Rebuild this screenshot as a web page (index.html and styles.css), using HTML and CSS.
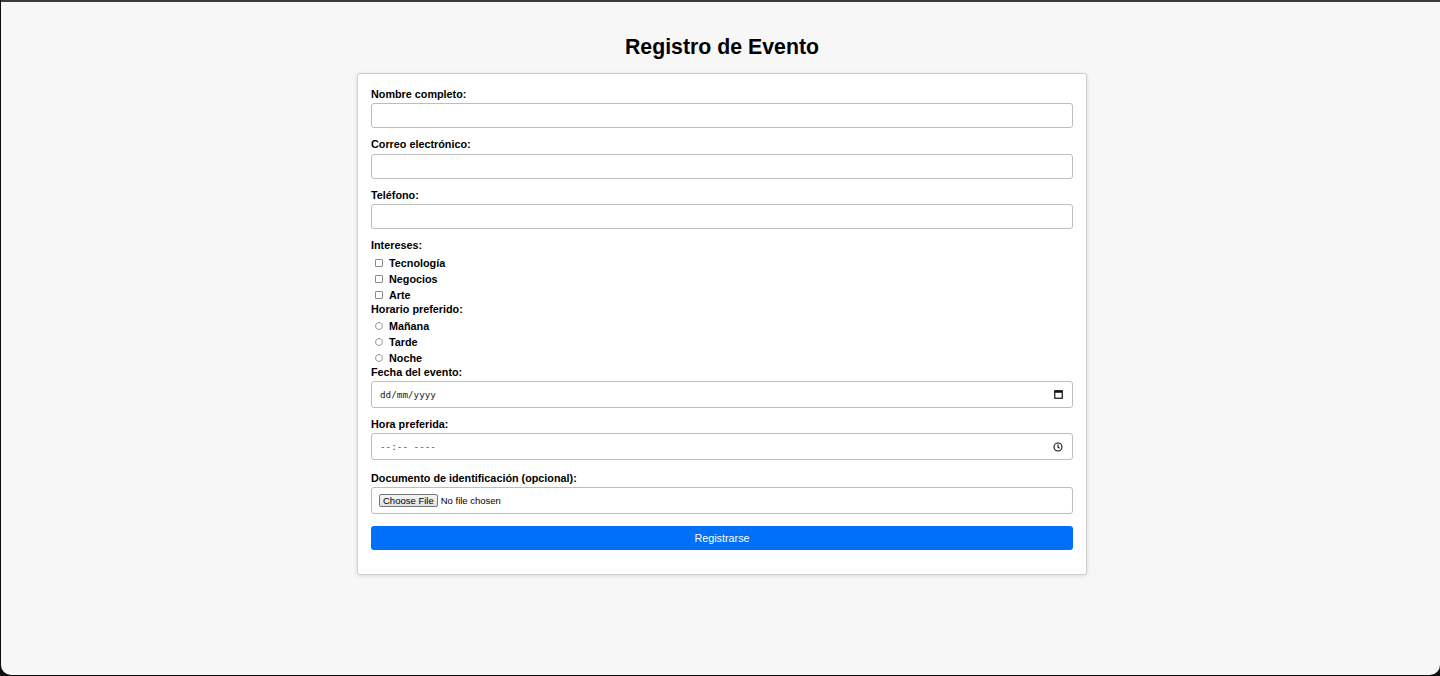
FILE: index.html
```html
<!DOCTYPE html>
<html lang="es">
<head>
<meta charset="utf-8">
<title>Registro de Evento</title>
<link rel="stylesheet" href="styles.css">
</head>
<body>
<div class="window">
  <h1 class="title">Registro de Evento</h1>
  <form class="card">
    <div class="group">
      <label class="label">Nombre completo:</label>
      <input class="input" type="text">
    </div>
    <div class="group">
      <label class="label">Correo electrónico:</label>
      <input class="input" type="text">
    </div>
    <div class="group">
      <label class="label">Teléfono:</label>
      <input class="input" type="text">
    </div>
    <div class="choices">
      <div class="label">Intereses:</div>
      <label class="option"><span class="box"></span>Tecnología</label>
      <label class="option"><span class="box"></span>Negocios</label>
      <label class="option"><span class="box"></span>Arte</label>
    </div>
    <div class="choices">
      <div class="label tight">Horario preferido:</div>
      <label class="option"><span class="box round"></span>Mañana</label>
      <label class="option"><span class="box round"></span>Tarde</label>
      <label class="option"><span class="box round"></span>Noche</label>
    </div>
    <div class="group">
      <div class="label">Fecha del evento:</div>
      <div class="input date picker">
        <span class="mono">dd/mm/yyyy</span>
        <svg class="icon" width="9" height="9" viewBox="0 0 9 9"><rect x="0.75" y="0.75" width="7.5" height="7.5" fill="none" stroke="#111" stroke-width="1.2"/><rect x="0.75" y="0.75" width="7.5" height="2" fill="#111"/></svg>
      </div>
    </div>
    <div class="group wide">
      <div class="label">Hora preferida:</div>
      <div class="input tall picker">
        <span class="mono dim">--:-- ----</span>
        <svg class="icon" width="10" height="10" viewBox="0 0 10 10"><circle cx="5" cy="5" r="4" fill="none" stroke="#111" stroke-width="1.1"/><path d="M5 2.6V5.2L6.6 6.2" fill="none" stroke="#111" stroke-width="1.1"/></svg>
      </div>
    </div>
    <div class="group last">
      <div class="label">Documento de identificación (opcional):</div>
      <div class="input tall file">
        <span class="file-btn">Choose File</span>
        <span class="file-text">No file chosen</span>
      </div>
    </div>
    <button class="submit" type="button">Registrarse</button>
  </form>
</div>
</body>
</html>
```
FILE: styles.css
```css
html, body {
  margin: 0;
  padding: 0;
  height: 100%;
  background: #0e0e0e;
}
body {
  font-family: "Liberation Sans", Arial, sans-serif;
  color: #000;
}
.window {
  margin-left: 1px;
  border-top: 2px solid #3c3c3c;
  background: #f7f7f7;
  border-radius: 0 0 10px 10px;
  padding-top: 32px;
  box-sizing: content-box;
  display: flex;
  flex-direction: column;
  align-items: center;
  height: 641px;
}
.title {
  margin: 0 0 13px 3px;
  font-size: 21.3px;
  line-height: 26px;
  font-weight: bold;
}
.card {
  box-sizing: border-box;
  width: 730px;
  margin-left: 3px;
  background: #fff;
  border: 1px solid #cfcfcf;
  border-radius: 3px;
  box-shadow: 0 1px 4px rgba(0, 0, 0, 0.12);
  padding: 13.5px 13px 24px 13px;
  display: flex;
  flex-direction: column;
}
.group {
  display: flex;
  flex-direction: column;
  margin-bottom: 10px;
}
.group.wide {
  margin-bottom: 11.5px;
}
.group.last {
  margin-bottom: 12px;
}
.label {
  display: block;
  font-size: 10.8px;
  line-height: 13px;
  font-weight: bold;
  margin-bottom: 2.5px;
}
.label.tight {
  margin-bottom: 2px;
}
.input {
  box-sizing: border-box;
  height: 25px;
  width: 100%;
  margin: 0;
  border: 1px solid #bdbdbd;
  border-radius: 3px;
  background: #fff;
  font: 10.8px "Liberation Sans", Arial, sans-serif;
}
.date {
  height: 26.5px;
}
.tall {
  height: 27px;
}
.picker {
  display: flex;
  align-items: center;
  justify-content: space-between;
  padding: 0 9px 0 8px;
}
.mono {
  font-family: "DejaVu Sans Mono", "Liberation Mono", monospace;
  font-size: 9.3px;
  color: #222;
}
.mono.dim {
  color: #444;
}
.icon {
  display: block;
}
.choices {
  display: flex;
  flex-direction: column;
}
.option {
  display: flex;
  align-items: center;
  height: 16px;
  font-size: 10.8px;
  font-weight: bold;
}
.box {
  box-sizing: border-box;
  width: 8px;
  height: 8px;
  margin: 0 6px 0 4px;
  border: 1px solid #8a8a8a;
  border-radius: 1px;
  background: #fff;
}
.box.round {
  border-radius: 50%;
  border-color: #999;
}
.file {
  display: flex;
  align-items: center;
  padding: 0 7px;
  gap: 3px;
}
.file-btn {
  font-size: 9.5px;
  line-height: 11px;
  padding: 0 3px;
  border: 1px solid #767676;
  border-radius: 2px;
  background: linear-gradient(#f4f4f4, #e2e2e2);
  color: #000;
}
.file-text {
  font-size: 9.5px;
  color: #000;
}
.submit {
  height: 24px;
  border: 0;
  border-radius: 3px;
  background: #0070f8;
  color: #fff;
  font: 10.8px "Liberation Sans", Arial, sans-serif;
  cursor: pointer;
}
```
